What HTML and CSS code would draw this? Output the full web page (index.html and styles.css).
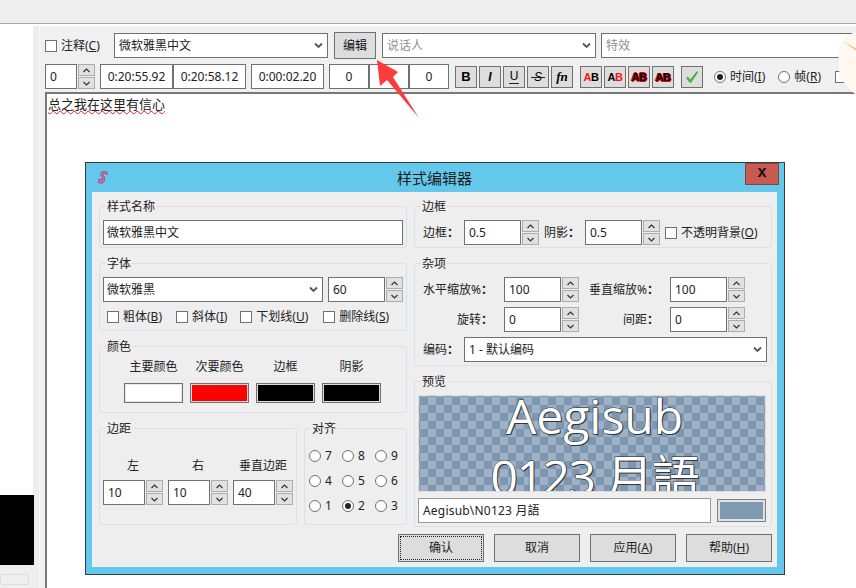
FILE: index.html
```html
<!DOCTYPE html>
<html lang="zh-CN">
<head>
  <meta charset="UTF-8" />
  <title>样式编辑器</title>
  <link rel="stylesheet" href="styles.css">
</head>
<body>
  <div class="menu-band"></div>

  <div class="main">
    <div class="side">
      <div class="side-white"></div>
      <div class="side-video"></div>
      <div class="side-bar"></div>
    </div>

    <div class="editor">
      <div class="row-one">
        <span class="check"></span>
        <span class="lbl note-lbl">注释(<u>C</u>)</span>
        <div class="field combo style-combo">微软雅黑中文<svg class="chev" viewBox="0 0 9 7"><path d="M1 1.500l3.500 3.500L8 1.500"/></svg></div>
        <div class="edit-btn">编辑</div>
        <div class="field combo actor-combo hint">说话人<svg class="chev" viewBox="0 0 9 7"><path d="M1 1.500l3.500 3.500L8 1.500"/></svg></div>
        <div class="field effect-field hint">特效</div>
      </div>

      <div class="row-two">
        <div class="field small layer">0</div>
        <div class="spin"><i><svg viewBox="0 0 9 7"><path d="M1.500 5L4.500 2l3 3"/></svg></i><i><svg viewBox="0 0 9 7"><path d="M1.500 2l3 3 3-3"/></svg></i></div>
        <div class="field small time t-a">0:20:55.92</div>
        <div class="field small time t-b">0:20:58.12</div>
        <div class="field small time t-c">0:00:02.20</div>
        <div class="field small margin m-a">0</div>
        <div class="field small margin m-b"></div>
        <div class="field small margin m-c">0</div>

        <div class="tools tools-a">
          <b class="tool tb">B</b>
          <b class="tool ti">I</b>
          <b class="tool tu">U</b>
          <b class="tool ts">S</b>
          <b class="tool tf">fn</b>
        </div>
        <div class="tools tools-b">
          <b class="tool ab"><em class="red">A</em>B</b>
          <b class="tool ab">A<em class="red">B</em></b>
          <b class="tool ab out-a">AB</b>
          <b class="tool ab out-b">AB</b>
        </div>
        <b class="tool ok"><svg viewBox="0 0 14 14"><path d="M1.500 8l1.200-1 2.700 3L12 1.500l.8.600L5.800 12.500H5z"/></svg></b>

        <span class="radio on first-radio"></span><span class="lbl">时间(<u>I</u>)</span>
        <span class="radio second-radio"></span><span class="lbl">帧(<u>R</u>)</span>
        <span class="check last-check"></span>
      </div>

      <div class="textbox"><span class="squiggle">总之我在这里有信心</span></div>
    </div>
  </div>

  <svg class="arrow" viewBox="0 0 46 60"><path d="M1 0L22 12 17 17 43 58 11 20 4 26z"/></svg>

  <div class="orb">
    <div class="orb-disc"><svg viewBox="0 0 14 10"><path d="M0 0L13 7.500V9.500L6 4.500z"/></svg></div>
  </div>

  <div class="dialog">
    <div class="titlebar">
      <svg class="logo" viewBox="0 0 10 13">
        <path class="logo-edge" d="M8.500 2.500C8 .8 4.500 .8 3.800 3 3.200 5 6.500 6 5.800 8.500 5.200 11 2.500 11.800 1.200 10.500 .2 9.300 2.500 8.500 4 9.500"/>
        <path class="logo-fill" d="M8.500 2.500C8 .8 4.500 .8 3.800 3 3.200 5 6.500 6 5.800 8.500 5.200 11 2.500 11.800 1.200 10.500 .2 9.300 2.500 8.500 4 9.500"/>
      </svg>
      <span class="title">样式编辑器</span>
      <div class="close">x</div>
    </div>

    <div class="dialog-body">
      <div class="columns">
        <div class="col">
          <div class="group g-name">
            <span class="legend">样式名称</span>
            <div class="field name-field">微软雅黑中文</div>
          </div>

          <div class="group g-font">
            <span class="legend">字体</span>
            <div class="font-row">
              <div class="field combo font-combo">微软雅黑<svg class="chev" viewBox="0 0 9 7"><path d="M1 1.500l3.500 3.500L8 1.500"/></svg></div>
              <div class="field size">60</div>
              <div class="spin"><i><svg viewBox="0 0 9 7"><path d="M1.500 5L4.500 2l3 3"/></svg></i><i><svg viewBox="0 0 9 7"><path d="M1.500 2l3 3 3-3"/></svg></i></div>
            </div>
            <div class="font-checks">
              <span class="check"></span><span class="lbl">粗体(<u>B</u>)</span>
              <span class="check"></span><span class="lbl">斜体(<u>I</u>)</span>
              <span class="check"></span><span class="lbl">下划线(<u>U</u>)</span>
              <span class="check"></span><span class="lbl">删除线(<u>S</u>)</span>
            </div>
          </div>

          <div class="group g-color">
            <span class="legend">颜色</span>
            <div class="swatches">
              <div class="swatch-col"><span>主要颜色</span><div class="swatch white"></div></div>
              <div class="swatch-col"><span>次要颜色</span><div class="swatch red-fill"></div></div>
              <div class="swatch-col"><span>边框</span><div class="swatch black"></div></div>
              <div class="swatch-col"><span>阴影</span><div class="swatch black"></div></div>
            </div>
          </div>

          <div class="bottom-groups">
            <div class="group g-margin">
              <span class="legend">边距</span>
              <div class="margin-cols">
                <div class="margin-col"><span>左</span><div class="spin-field"><div class="field">10</div><div class="spin"><i><svg viewBox="0 0 9 7"><path d="M1.500 5L4.500 2l3 3"/></svg></i><i><svg viewBox="0 0 9 7"><path d="M1.500 2l3 3 3-3"/></svg></i></div></div></div>
                <div class="margin-col"><span>右</span><div class="spin-field"><div class="field">10</div><div class="spin"><i><svg viewBox="0 0 9 7"><path d="M1.500 5L4.500 2l3 3"/></svg></i><i><svg viewBox="0 0 9 7"><path d="M1.500 2l3 3 3-3"/></svg></i></div></div></div>
                <div class="margin-col"><span>垂直边距</span><div class="spin-field"><div class="field">40</div><div class="spin"><i><svg viewBox="0 0 9 7"><path d="M1.500 5L4.500 2l3 3"/></svg></i><i><svg viewBox="0 0 9 7"><path d="M1.500 2l3 3 3-3"/></svg></i></div></div></div>
              </div>
            </div>

            <div class="group g-align">
              <span class="legend">对齐</span>
              <div class="align-grid">
                <div class="al"><span class="radio"></span>7</div>
                <div class="al"><span class="radio"></span>8</div>
                <div class="al"><span class="radio"></span>9</div>
                <div class="al"><span class="radio"></span>4</div>
                <div class="al"><span class="radio"></span>5</div>
                <div class="al"><span class="radio"></span>6</div>
                <div class="al"><span class="radio"></span>1</div>
                <div class="al"><span class="radio on"></span>2</div>
                <div class="al"><span class="radio"></span>3</div>
              </div>
            </div>
          </div>
        </div>

        <div class="col">
          <div class="group g-border">
            <span class="legend">边框</span>
            <div class="border-row">
              <span class="lbl">边框<span class="colon">：</span></span>
              <div class="spin-field wide"><div class="field">0.5</div><div class="spin"><i><svg viewBox="0 0 9 7"><path d="M1.500 5L4.500 2l3 3"/></svg></i><i><svg viewBox="0 0 9 7"><path d="M1.500 2l3 3 3-3"/></svg></i></div></div>
              <span class="lbl shadow-lbl">阴影<span class="colon">：</span></span>
              <div class="spin-field wide"><div class="field">0.5</div><div class="spin"><i><svg viewBox="0 0 9 7"><path d="M1.500 5L4.500 2l3 3"/></svg></i><i><svg viewBox="0 0 9 7"><path d="M1.500 2l3 3 3-3"/></svg></i></div></div>
              <span class="check opaque-check"></span><span class="lbl">不透明背景(<u>O</u>)</span>
            </div>
          </div>

          <div class="group g-misc">
            <span class="legend">杂项</span>
            <div class="misc-grid">
              <span class="lbl r">水平缩放%<span class="colon">：</span></span>
              <div class="spin-field wide"><div class="field">100</div><div class="spin"><i><svg viewBox="0 0 9 7"><path d="M1.500 5L4.500 2l3 3"/></svg></i><i><svg viewBox="0 0 9 7"><path d="M1.500 2l3 3 3-3"/></svg></i></div></div>
              <span class="lbl r">垂直缩放%<span class="colon">：</span></span>
              <div class="spin-field wide"><div class="field">100</div><div class="spin"><i><svg viewBox="0 0 9 7"><path d="M1.500 5L4.500 2l3 3"/></svg></i><i><svg viewBox="0 0 9 7"><path d="M1.500 2l3 3 3-3"/></svg></i></div></div>
              <span class="lbl r">旋转<span class="colon">：</span></span>
              <div class="spin-field wide"><div class="field">0</div><div class="spin"><i><svg viewBox="0 0 9 7"><path d="M1.500 5L4.500 2l3 3"/></svg></i><i><svg viewBox="0 0 9 7"><path d="M1.500 2l3 3 3-3"/></svg></i></div></div>
              <span class="lbl r">间距<span class="colon">：</span></span>
              <div class="spin-field wide"><div class="field">0</div><div class="spin"><i><svg viewBox="0 0 9 7"><path d="M1.500 5L4.500 2l3 3"/></svg></i><i><svg viewBox="0 0 9 7"><path d="M1.500 2l3 3 3-3"/></svg></i></div></div>
            </div>
            <div class="code-row">
              <span class="lbl">编码<span class="colon">：</span></span>
              <div class="field combo">1 - 默认编码<svg class="chev" viewBox="0 0 9 7"><path d="M1 1.500l3.500 3.500L8 1.500"/></svg></div>
            </div>
          </div>

          <div class="group g-preview">
            <span class="legend">预览</span>
            <div class="preview">
              <div class="preview-line one">Aegisub</div>
              <div class="preview-line two">0123 月語</div>
            </div>
            <div class="preview-row">
              <div class="field plain">Aegisub\N0123 月語</div>
              <div class="preview-swatch"></div>
            </div>
          </div>
        </div>
      </div>

      <div class="actions">
        <div class="btn default"><span>确认</span></div>
        <div class="btn">取消</div>
        <div class="btn">应用(<u>A</u>)</div>
        <div class="btn">帮助(<u>H</u>)</div>
      </div>
    </div>
  </div>
</body>
</html>
```

FILE: styles.css
```css
* {
  box-sizing: border-box;
}

html, body {
  margin: 0;
  height: 100%;
}

body {
  width: 856px;
  height: 588px;
  position: relative;
  overflow: hidden;
  background: #ffffff;
  color: #111111;
  font-family: "Noto Sans", "Noto Sans CJK SC", sans-serif;
  font-size: 12px;
  line-height: 16px;
}

u {
  text-decoration: underline;
}

/* app behind the dialog */
.menu-band {
  height: 24px;
  background: #eeeeee;
  border-bottom: 1px solid #a6a6a6;
}

.main {
  display: flex;
  height: 564px;
  padding-top: 2px;
}

.side {
  width: 40px;
  background: #eeeeee;
  border-right: 1px solid #f8f8f8;
  flex: none;
}

.side-white {
  width: 33px;
  height: 469px;
  background: #ffffff;
}

.side-video {
  width: 34px;
  height: 70px;
  background: #000000;
}

.side-bar {
  width: 29px;
  height: 11px;
  margin-top: 9px;
  border: 1px solid #dddddd;
  border-radius: 2px;
}

.editor {
  flex: 1;
  min-width: 0;
  background: #f0f0f0;
  padding: 6px 0 0 5px;
  display: flex;
  flex-direction: column;
}

.row-one {
  display: flex;
  align-items: center;
  height: 27px;
}

.note-lbl {
  margin-left: 4px;
  width: 53px;
  color: #222222;
}

.style-combo {
  width: 214px;
  height: 25px;
  padding-left: 3px;
}

.edit-btn {
  width: 42px;
  height: 27px;
  margin: 0 6px;
  background: #dddddd;
  border: 1px solid #707070;
  text-align: center;
  line-height: 25px;
}

.actor-combo {
  width: 214px;
  height: 25px;
  padding-left: 3px;
}

.effect-field {
  width: 255px;
  height: 25px;
  margin-left: 5px;
  flex: none;
  padding-left: 3px;
}

.row-two {
  display: flex;
  align-items: center;
  height: 25px;
  margin-top: 5px;
}

.small {
  height: 25px;
  flex: none;
}

.layer {
  width: 32px;
}

.row-two > .spin {
  margin-right: 5px;
}

.time {
  width: 73px;
  padding: 0;
  text-align: center;
}

.t-c {
  margin-left: 5px;
}

.margin {
  width: 40px;
  padding: 0;
  text-align: center;
}

.m-a {
  margin-left: 5px;
}

.tools {
  display: flex;
  gap: 2px;
}

.tools-a {
  margin-left: 6px;
}

.tools-b {
  margin-left: 7px;
}

.tool {
  display: block;
  width: 22px;
  height: 22px;
  background: #dddddd;
  border: 1px solid #707070;
  text-align: center;
  line-height: 20px;
  font-family: "Liberation Sans", sans-serif;
  font-size: 12px;
  font-style: normal;
  color: #000000;
}

.tb {
  font-weight: 900;
  font-size: 13px;
}

.ti {
  font-style: italic;
}

.tu {
  font-weight: 400;
  background: linear-gradient(#222222, #222222) center 16px / 10px 1px no-repeat #dddddd;
  line-height: 18px;
}

.ts {
  font-style: italic;
  font-weight: 400;
  background: linear-gradient(#222222, #222222) center 10px / 14px 1px no-repeat #dddddd;
}

.tf {
  font-family: "Liberation Serif", serif;
  font-style: italic;
  font-size: 13px;
}

.ab {
  font-size: 11px;
  font-weight: 700;
  letter-spacing: -0.5px;
}

.ab em {
  font-style: normal;
}

.red {
  color: #ff1010;
}

.out-a {
  text-shadow: 1px 0 0 #e00000, -1px 0 0 #e00000, 0 1px 0 #e00000, 0 -1px 0 #e00000;
}

.out-b {
  text-shadow: 1px 1px 0 #e00000, 0 1px 0 #e00000, -1px 0 0 #e00000;
}

.ok {
  margin-left: 7px;
  padding: 3px;
}

.ok svg {
  display: block;
  width: 14px;
  height: 14px;
}

.ok path {
  fill: #2ccc2c;
  stroke: #1d8a1d;
  stroke-width: 0.5;
}

.first-radio {
  margin-left: 11px;
  margin-right: 4px;
}

.second-radio {
  margin-left: 13px;
  margin-right: 4px;
}

.last-check {
  margin-left: 14px;
}

.textbox {
  flex: 1;
  margin-top: 3px;
  background: #ffffff;
  border: solid #777777;
  border-width: 2px 0 0 2px;
  padding: 2px 0 0 1px;
  color: #222222;
  font-size: 13px;
}

.squiggle {
  text-decoration: underline wavy #e02020 1px;
}

/* shared controls */
.field {
  display: flex;
  align-items: center;
  height: 25px;
  padding: 0 4px;
  background: #ffffff;
  border: 1px solid #707070;
  white-space: nowrap;
  color: #222222;
}

.field.hint {
  color: #8f8f8f;
}

.time, .margin {
  justify-content: center;
}

.combo {
  flex: none;
  position: relative;
  justify-content: space-between;
}

.chev {
  width: 9px;
  height: 7px;
  flex: none;
  fill: none;
  stroke: #555555;
  stroke-width: 1.8;
}

.spin {
  display: flex;
  flex-direction: column;
  justify-content: space-between;
  width: 17px;
  height: 25px;
  margin-left: 1px;
  flex: none;
}

.spin i {
  display: flex;
  align-items: center;
  justify-content: center;
  height: 12px;
  background: #e1e1e1;
  border: 1px solid #adadad;
}

.spin svg {
  width: 9px;
  height: 7px;
  fill: none;
  stroke: #333333;
  stroke-width: 1.2;
}

.spin-field {
  display: flex;
}

.spin-field .field {
  flex: 1;
  min-width: 0;
}

.check {
  display: inline-block;
  flex: none;
  width: 12px;
  height: 12px;
  background: #ffffff;
  border: 1px solid #707070;
}

.radio {
  display: inline-block;
  flex: none;
  width: 12px;
  height: 12px;
  border-radius: 50%;
  background: #ffffff;
  border: 1px solid #707070;
  position: relative;
}

.radio.on::after {
  content: "";
  position: absolute;
  left: 2px;
  top: 2px;
  width: 6px;
  height: 6px;
  border-radius: 50%;
  background: #222222;
}

.lbl {
  white-space: nowrap;
  color: #222222;
}

.colon {
  font-family: "Noto Sans CJK TC", sans-serif;
  font-weight: 700;
}

/* annotation and decoration over the page */
.arrow {
  position: absolute;
  left: 376px;
  top: 60px;
  width: 46px;
  height: 60px;
}

.arrow path {
  fill: #fb3c3c;
}

.orb {
  position: absolute;
  left: 836px;
  top: 22px;
  width: 20px;
  height: 80px;
  overflow: hidden;
}

.orb-disc {
  width: 75px;
  height: 75px;
  margin: 3px 0 0 2px;
  border-radius: 50%;
  background: linear-gradient(90deg, #fffaf3, #fdf1dc);
  box-shadow: 0 0 2px rgba(0, 0, 0, 0.15);
}

.orb-disc svg {
  display: block;
  width: 14px;
  height: 10px;
  margin-left: 5px;
  position: relative;
  top: 16px;
  fill: #f0c078;
}

/* dialog window */
.dialog {
  position: absolute;
  left: 85px;
  top: 162px;
  width: 700px;
  height: 413px;
  background: #63c8ec;
  border: 1px solid #333b40;
  padding: 0 7px 7px 6px;
  display: flex;
  flex-direction: column;
}

.titlebar {
  height: 29px;
  flex: none;
  position: relative;
  display: flex;
  align-items: center;
  justify-content: center;
}

.logo {
  position: absolute;
  left: 6px;
  top: 8px;
  width: 10px;
  height: 13px;
  fill: none;
  stroke-linecap: round;
}

.logo-edge {
  stroke: #5a4a78;
  stroke-width: 2.6;
}

.logo-fill {
  stroke: #f0609a;
  stroke-width: 1.6;
}

.title {
  font-size: 15px;
  color: #1a1a1a;
}

.close {
  position: absolute;
  right: -2px;
  top: 0;
  width: 34px;
  height: 22px;
  background: #c75b50;
  border: 1px solid #7a4a44;
  text-align: center;
  font-family: "Liberation Sans", sans-serif;
  font-weight: 700;
  font-size: 16px;
  line-height: 16px;
  color: #111111;
}

.dialog-body {
  flex: 1;
  background: #eeeeee;
  padding: 14px 5px 0 7px;
  display: flex;
  flex-direction: column;
}

.columns {
  display: grid;
  grid-template-columns: 308px 358px;
  column-gap: 7px;
}

.group {
  position: relative;
  border: 1px solid #d9e0e6;
  border-radius: 3px;
  padding: 13px 3px 0;
  margin-bottom: 15px;
}

.col > .group:last-child,
.bottom-groups .group {
  margin-bottom: 0;
}

.legend {
  position: absolute;
  left: 6px;
  top: -8px;
  padding: 0 1px;
  background: #eeeeee;
  color: #222222;
}

.g-name {
  height: 42px;
}

.name-field {
  padding-left: 3px;
}

.g-font {
  height: 68px;
}

.font-row {
  display: flex;
}

.font-combo {
  width: 220px;
  padding-left: 3px;
}

.size {
  width: 57px;
  margin-left: 5px;
}

.font-checks {
  display: flex;
  align-items: center;
  margin: 7px 0 0 4px;
}

.font-checks .lbl {
  margin-left: 4px;
}

.font-checks .lbl:nth-child(2) {
  margin-right: 14px;
}

.font-checks .lbl:nth-child(4) {
  margin-right: 13px;
}

.font-checks .lbl:nth-child(6) {
  margin-right: 15px;
}

.g-color {
  height: 67px;
}

.swatches {
  display: grid;
  grid-template-columns: repeat(4, 59px);
  column-gap: 7px;
  margin: -1px 0 0 21px;
}

.swatch-col {
  display: flex;
  flex-direction: column;
  align-items: center;
  gap: 8px;
  color: #222222;
}

.swatch {
  width: 59px;
  height: 20px;
  border: 1px solid #707070;
}

.white {
  background: #ffffff;
  box-shadow: inset 0 0 0 1px #e8e8e8;
}

.red-fill {
  background: #ff0000;
  box-shadow: inset 0 0 0 1px #dddddd;
}

.black {
  background: #000000;
  box-shadow: inset 0 0 0 1px #dddddd;
}

.bottom-groups {
  display: grid;
  grid-template-columns: 198px 103px;
  column-gap: 7px;
}

.g-margin, .g-align {
  height: 97px;
}

.margin-cols {
  display: grid;
  grid-template-columns: repeat(3, 60px);
  column-gap: 5px;
  margin-top: 16px;
}

.margin-col {
  display: flex;
  flex-direction: column;
  align-items: center;
  gap: 6px;
  color: #222222;
}

.margin-col .spin-field {
  width: 60px;
}

.align-grid {
  display: grid;
  grid-template-columns: repeat(3, 33px);
  grid-auto-rows: 25px;
  margin: 1px 0 0 1px;
  align-items: center;
}

.al {
  display: flex;
  align-items: center;
  gap: 4px;
  color: #222222;
}

.g-border {
  height: 42px;
}

.border-row {
  display: flex;
  align-items: center;
  padding-left: 5px;
}

.border-row .lbl:first-child {
  width: 41px;
}

.border-row .wide {
  width: 75px;
}

.shadow-lbl {
  width: 41px;
  margin-left: 5px;
}

.opaque-check {
  margin: 0 4px 0 5px;
}

.g-misc {
  height: 103px;
}

.misc-grid {
  display: grid;
  grid-template-columns: 70px 75px 69px 75px;
  column-gap: 11px;
  row-gap: 5px;
  align-items: center;
  justify-items: end;
  margin-left: 5px;
}

.misc-grid .wide {
  width: 75px;
}

.code-row {
  display: flex;
  align-items: center;
  margin: 5px 0 0 5px;
}

.code-row .lbl {
  width: 41px;
}

.code-row .combo {
  width: 303px;
}

.g-preview {
  height: 146px;
  margin-top: 0;
  padding-right: 5px;
}

.preview {
  height: 97px;
  overflow: hidden;
  padding-left: 5px;
  border: 1px solid #dcdcdc;
  background: conic-gradient(#a0b1c4 25%, #7b97b1 0 50%, #a0b1c4 0 75%, #7b97b1 0) 1px 1px / 16px 16px;
  text-align: center;
  color: #ffffff;
  font-family: "Open Sans", "Noto Sans CJK SC", sans-serif;
  font-size: 48px;
  line-height: 61px;
}

.preview-line {
  -webkit-text-stroke: 1px #222222;
  paint-order: stroke fill;
  text-shadow: 1px 1px 0 #333333;
  white-space: nowrap;
}

.preview-line.one {
  margin-top: -11px;
}

.preview-line.two {
  letter-spacing: -1.5px;
}

.preview-row {
  display: flex;
  align-items: center;
  justify-content: space-between;
  margin-top: 6px;
}

.plain {
  width: 293px;
  border-color: #9a9a9a;
  color: #222222;
  letter-spacing: 0.2px;
}

.preview-swatch {
  width: 49px;
  height: 23px;
  background: #7d9ab2;
  border: 3px solid #e0e0e0;
  outline: 1px solid #808080;
  outline-offset: -1px;
}

.actions {
  display: flex;
  justify-content: flex-end;
  gap: 10px;
  margin-top: 7px;
}

.btn {
  width: 86px;
  height: 28px;
  display: flex;
  align-items: center;
  justify-content: center;
  background: #dddddd;
  border: 1px solid #707070;
  color: #222222;
  white-space: pre;
}

.btn.default {
  padding: 1px;
}

.btn.default span {
  flex: 1;
  align-self: stretch;
  display: flex;
  align-items: center;
  justify-content: center;
  border: 1px dotted #222222;
}
```
